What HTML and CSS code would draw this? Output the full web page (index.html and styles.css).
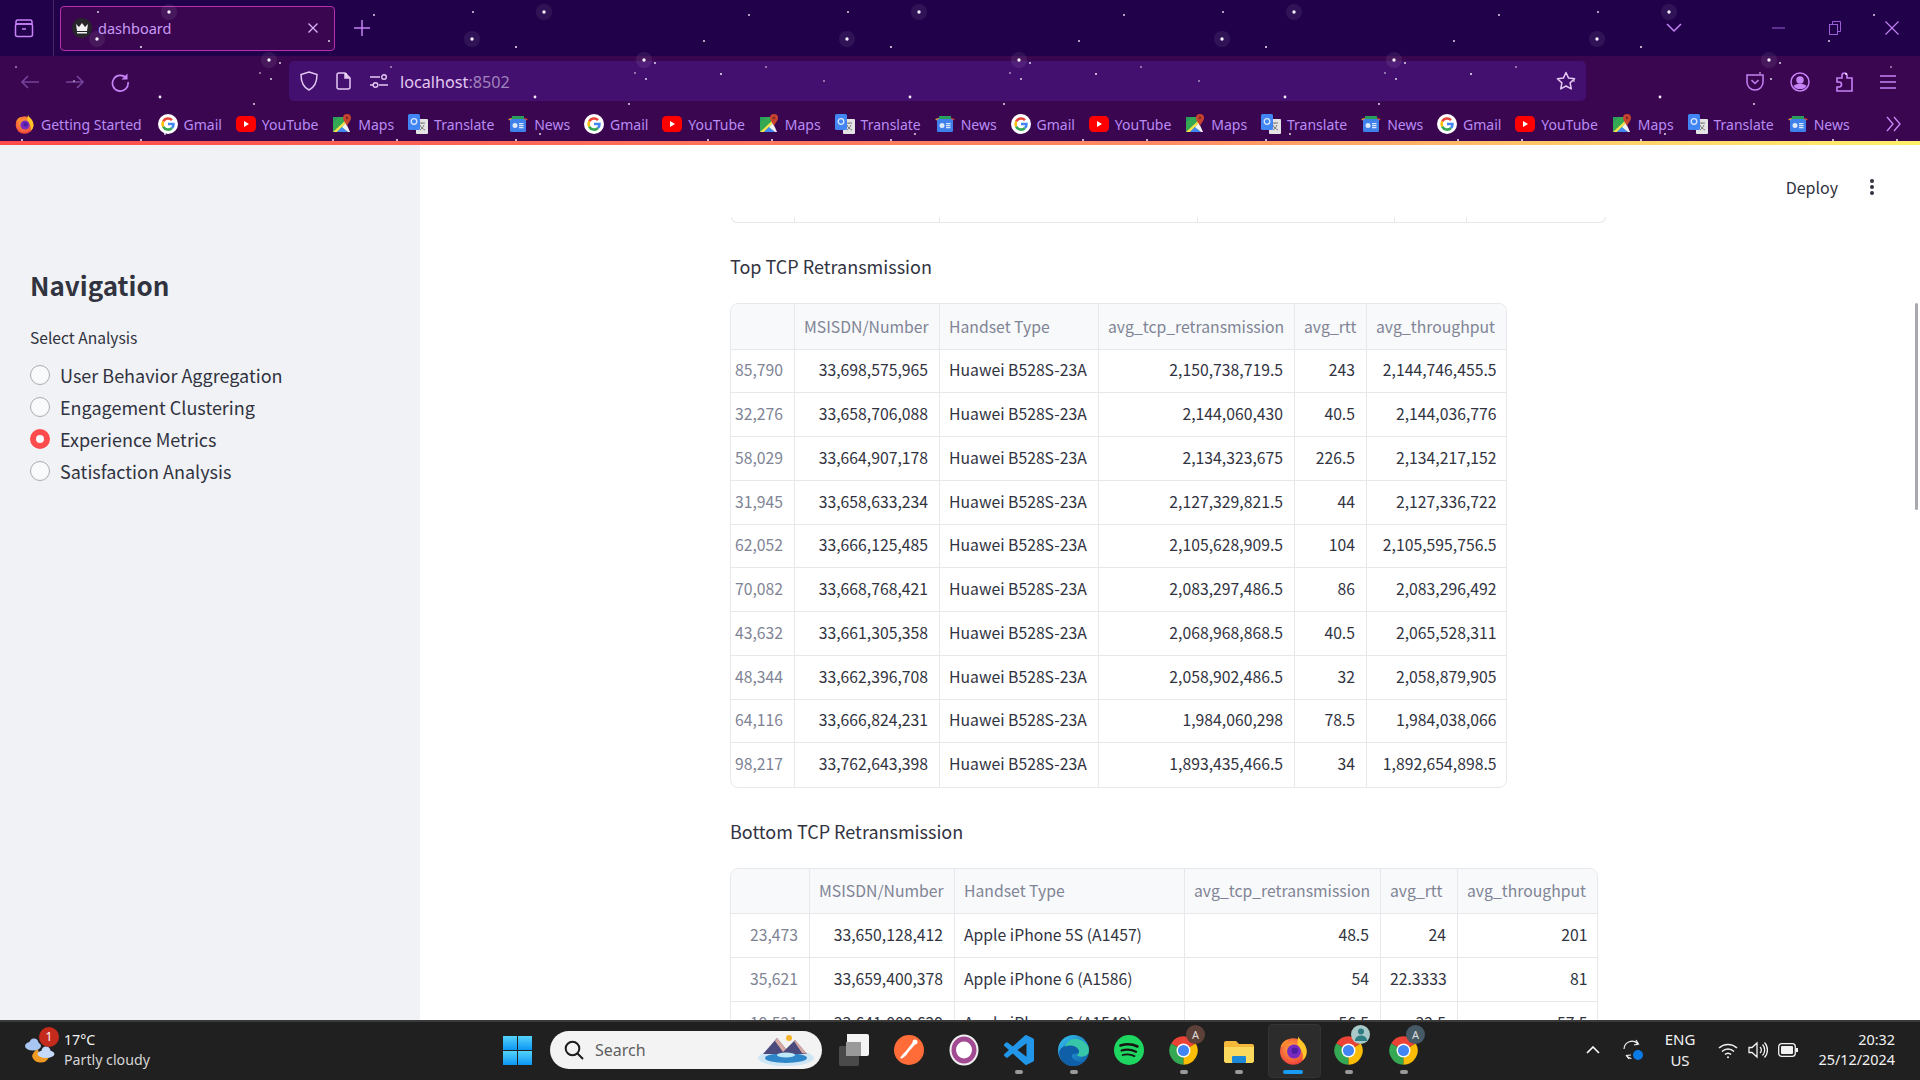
FILE: index.html
```html
<!DOCTYPE html>
<html lang="en">
<head>
  <meta charset="UTF-8">
  <title>dashboard</title>
  <link rel="stylesheet" href="styles.css">
</head>
<body>
  <svg class="sprites" width="0" height="0">
    <defs>
      <radialGradient id="ffBody" cx="45%" cy="40%" r="70%"><stop offset="0" stop-color="#ffb03a"/><stop offset="1" stop-color="#f0323c"/></radialGradient>
      <linearGradient id="edgeBody" x1="0" y1="0" x2="1" y2="1"><stop offset="0" stop-color="#35c1f1"/><stop offset="1" stop-color="#0c59a4"/></linearGradient>
      <linearGradient id="winBody" x1="0" y1="0" x2="0" y2="1"><stop offset="0" stop-color="#55d3fb"/><stop offset="1" stop-color="#0c96f4"/></linearGradient>
    </defs>
    <symbol id="i-firefox" viewBox="0 0 20 20">
      <circle cx="9.5" cy="11" r="8.8" fill="url(#ffBody)"/>
      <path d="M13 1c1 3 5 4 5.5 9.5.2 3-1 5-3 6.5 1-3 .5-6-2-8-1.500-1.500-1.500-4.500-.5-8z" fill="#ffc627"/>
      <path d="M1 8c1-3 3-4.500 5-5-.5 1.500 0 2.500 1 3z" fill="#ff8a2b"/>
      <circle cx="10" cy="11" r="4.600" fill="#7a2bbf"/>
      <circle cx="10.500" cy="10.500" r="2.200" fill="#4b1fa0"/>
    </symbol>
    <symbol id="i-google" viewBox="0 0 20 20">
      <circle cx="10" cy="10" r="10" fill="#fff"/>
      <path d="M5.200 7.400A5.500 5.500 0 0 1 14 6.200" fill="none" stroke="#ea4335" stroke-width="2.500"/>
      <path d="M5.200 7.400a5.500 5.500 0 0 0 0 5.200" fill="none" stroke="#fbbc05" stroke-width="2.500"/>
      <path d="M5.200 12.600a5.500 5.500 0 0 0 8.800 1.400" fill="none" stroke="#34a853" stroke-width="2.500"/>
      <path d="M14 14a5.500 5.500 0 0 0 1.500-4H10" fill="none" stroke="#4285f4" stroke-width="2.500"/>
    </symbol>
    <symbol id="i-youtube" viewBox="0 0 20 20">
      <rect x="0" y="2" width="20" height="16" rx="4.500" fill="#f00"/>
      <path d="M8 7l5 3-5 3z" fill="#fff"/>
    </symbol>
    <symbol id="i-maps" viewBox="0 0 20 20">
      <path d="M1 3h13v15H1z" fill="#34a853"/>
      <path d="M1 18l13-12v3L5 18z" fill="#fbe14d"/>
      <path d="M5 18l5-5 6 5z" fill="#4285f4"/>
      <path d="M10 13l4-4 4 9h-2z" fill="#f4f4f4"/>
      <path d="M1 3h6L1 9z" fill="#2a9d5a"/>
      <path d="M15 0a4 4 0 0 1 4 4c0 3-3 5-4 8-1-3-4-5-4-8a4 4 0 0 1 4-4z" fill="#c8442f"/>
      <circle cx="15" cy="4" r="1.400" fill="#8a2a1e"/>
    </symbol>
    <symbol id="i-translate" viewBox="0 0 20 20">
      <rect x="8" y="5" width="12" height="15" rx="1" fill="#e4e4e4"/>
      <path d="M11 9h6M14 9v1M12 11c1 3 3 4 5 5M16 11c-1 2-2 4-4 5" fill="none" stroke="#777" stroke-width="1"/>
      <rect x="0" y="0" width="12" height="16" rx="1.500" fill="#4285f4"/>
      <circle cx="6" cy="7.500" r="2.800" fill="none" stroke="#dbe7fd" stroke-width="1.300"/>
    </symbol>
    <symbol id="i-news" viewBox="0 0 20 20">
      <path d="M4 2h12v6H4z" fill="#2a9d5a"/>
      <path d="M0 5l4-1 1 5z" fill="#e8a33a"/>
      <path d="M20 5l-4-1-1 5z" fill="#d9402f"/>
      <rect x="2" y="5" width="16" height="13" rx="1.500" fill="#3f81ea"/>
      <rect x="4.500" y="9" width="5" height="5" rx="2.500" fill="#dce8fb"/>
      <path d="M11 9h4.500v1.200H11zM11 11h4.500v1.200H11zM11 13h4.500v1.200H11z" fill="#dce8fb"/>
    </symbol>
    <symbol id="i-chrome" viewBox="0 0 24 24">
      <path d="M12 12L2.470 6.500A11 11 0 0 1 21.530 6.500z" fill="#ea4335"/>
      <path d="M12 12L2.470 6.500A11 11 0 0 0 12 23z" fill="#34a853"/>
      <path d="M12 12L21.530 6.500A11 11 0 0 1 12 23z" fill="#fbbc05"/>
      <circle cx="12" cy="12" r="5.400" fill="#fff"/>
      <circle cx="12" cy="12" r="4.300" fill="#4285f4"/>
    </symbol>
  </svg>

  <header class="browser">
    <div class="titlebar">
      <div class="view-btn">
        <svg width="20" height="20" viewBox="0 0 20 20" fill="none" stroke="#c583f5" stroke-width="1.500"><rect x="1.500" y="6" width="17" height="12.500" rx="2"/><path d="M4 2h12a2 2 0 0 1 2 2v2H2V4a2 2 0 0 1 2-2zM8 11h4"/></svg>
      </div>
      <div class="tab">
        <span class="tab-icon">
          <svg width="14" height="12" viewBox="0 0 14 12"><path d="M1 2l3 3 3-4 3 4 3-3-1 7H2zM2 10h10v1.500H2z" fill="#f2f2f2"/></svg>
        </span>
        <span class="tab-title">dashboard</span>
        <svg class="tab-close" width="12" height="12" viewBox="0 0 12 12" stroke="#d9b4f7" stroke-width="1.300"><path d="M1.500 1.500l9 9M10.500 1.500l-9 9"/></svg>
      </div>
      <svg class="new-tab" width="16" height="16" viewBox="0 0 16 16" stroke="#c583f5" stroke-width="1.500"><path d="M8 0v16M0 8h16"/></svg>
      <svg class="tab-list" width="16" height="10" viewBox="0 0 16 10" fill="none" stroke="#c583f5" stroke-width="1.500"><path d="M1 1l7 7 7-7"/></svg>
      <div class="win-controls">
        <svg width="13" height="2" viewBox="0 0 13 2"><path d="M0 1h13" stroke="#9a5fd6" stroke-width="1"/></svg>
        <svg width="12" height="14" viewBox="0 0 12 14" fill="none" stroke="#9a5fd6"><rect x=".5" y="3.500" width="8" height="10"/><path d="M3.500 3.500V.5h8v10h-3"/></svg>
        <svg width="14" height="14" viewBox="0 0 14 14" stroke="#c583f5" stroke-width="1.100"><path d="M.5.5l13 13M13.500.5l-13 13"/></svg>
      </div>
    </div>

    <div class="toolbar">
      <div class="nav-btns">
        <svg width="20" height="16" viewBox="0 0 20 16" fill="none" stroke="#74439a" stroke-width="1.600"><path d="M19 8H2M8 2L2 8l6 6"/></svg>
        <svg width="20" height="16" viewBox="0 0 20 16" fill="none" stroke="#74439a" stroke-width="1.600"><path d="M1 8h17M12 2l6 6-6 6"/></svg>
        <svg width="20" height="20" viewBox="0 0 20 20" fill="none" stroke="#c583f5" stroke-width="1.700"><path d="M16.500 6.500A7.800 7.800 0 1 0 18 10"/><path d="M17.500 1.500v6h-6z" fill="#c583f5" stroke="none"/></svg>
      </div>
      <div class="urlbar">
        <svg width="18" height="20" viewBox="0 0 18 20" fill="none" stroke="#e3c8f2" stroke-width="1.500"><path d="M9 1l8 2.500C17 11 15 16 9 19 3 16 1 11 1 3.500z"/></svg>
        <svg width="15" height="18" viewBox="0 0 15 18" fill="none" stroke="#e3c8f2" stroke-width="1.500"><path d="M9 1H3a2 2 0 0 0-2 2v12a2 2 0 0 0 2 2h9a2 2 0 0 0 2-2V6z"/><path d="M9 1v5h5" fill="#e3c8f2"/></svg>
        <svg width="19" height="14" viewBox="0 0 19 14" fill="none" stroke="#e3c8f2" stroke-width="1.400"><path d="M1 3h10M1 11h3M10 11h9"/><circle cx="15" cy="3" r="2.300"/><circle cx="6.500" cy="11" r="2.300"/></svg>
        <span class="url-text">localhost<span class="url-port">:8502</span></span>
        <svg class="url-star" width="20" height="20" viewBox="0 0 20 20" fill="none" stroke="#e3c8f2" stroke-width="1.500" stroke-linejoin="round"><path d="M10 1.500l2.600 5.600 6 .7-4.500 4.100 1.200 6L10 15l-5.300 2.900 1.200-6L1.400 7.800l6-.7z"/></svg>
      </div>
      <div class="tool-btns">
        <svg width="18" height="18" viewBox="0 0 18 18" fill="none" stroke="#c583f5" stroke-width="1.500"><path d="M1 2h16v7a8 8 0 0 1-16 0z"/><path d="M5.500 7L9 10.500 12.500 7"/></svg>
        <svg width="20" height="20" viewBox="0 0 20 20" fill="none" stroke="#c583f5" stroke-width="1.500"><circle cx="10" cy="10" r="9"/><circle cx="10" cy="8" r="3" fill="#c583f5"/><path d="M4.500 14c2-2 9-2 11 0-2 3-9 3-11 0z" fill="#c583f5"/></svg>
        <svg width="18" height="20" viewBox="0 0 18 20" fill="none" stroke="#c583f5" stroke-width="1.600"><path d="M1 6h5V3.500a2.500 2.500 0 0 1 5 0V6h5v13H1v-4h2a2 2 0 0 0 0-5H1z"/></svg>
        <svg width="16" height="14" viewBox="0 0 16 14" stroke="#c583f5" stroke-width="1.400"><path d="M0 1h16M0 7h16M0 13h16"/></svg>
      </div>
    </div>

    <nav class="bookmarks">
      <a class="bookmark first"><svg><use href="#i-firefox"/></svg>Getting Started</a>
      <a class="bookmark"><svg><use href="#i-google"/></svg>Gmail</a>
      <a class="bookmark"><svg><use href="#i-youtube"/></svg>YouTube</a>
      <a class="bookmark"><svg><use href="#i-maps"/></svg>Maps</a>
      <a class="bookmark"><svg><use href="#i-translate"/></svg>Translate</a>
      <a class="bookmark"><svg><use href="#i-news"/></svg>News</a>
      <a class="bookmark"><svg><use href="#i-google"/></svg>Gmail</a>
      <a class="bookmark"><svg><use href="#i-youtube"/></svg>YouTube</a>
      <a class="bookmark"><svg><use href="#i-maps"/></svg>Maps</a>
      <a class="bookmark"><svg><use href="#i-translate"/></svg>Translate</a>
      <a class="bookmark"><svg><use href="#i-news"/></svg>News</a>
      <a class="bookmark"><svg><use href="#i-google"/></svg>Gmail</a>
      <a class="bookmark"><svg><use href="#i-youtube"/></svg>YouTube</a>
      <a class="bookmark"><svg><use href="#i-maps"/></svg>Maps</a>
      <a class="bookmark"><svg><use href="#i-translate"/></svg>Translate</a>
      <a class="bookmark"><svg><use href="#i-news"/></svg>News</a>
      <a class="bookmark"><svg><use href="#i-google"/></svg>Gmail</a>
      <a class="bookmark"><svg><use href="#i-youtube"/></svg>YouTube</a>
      <a class="bookmark"><svg><use href="#i-maps"/></svg>Maps</a>
      <a class="bookmark"><svg><use href="#i-translate"/></svg>Translate</a>
      <a class="bookmark"><svg><use href="#i-news"/></svg>News</a>
      <svg class="bookmark-more" width="16" height="16" viewBox="0 0 16 16" fill="none" stroke="#c583f5" stroke-width="1.400"><path d="M1 1l6 7-6 7M8 1l6 7-6 7"/></svg>
    </nav>

    <!-- theme stars, repeats every 375px -->
    <svg class="stars" width="1920" height="141">
      <defs>
        <pattern id="starTile" width="375" height="141" patternUnits="userSpaceOnUse">
          <g fill="#fff" fill-opacity=".07">
            <circle cx="169" cy="12" r="8"/><circle cx="97" cy="39" r="8"/><circle cx="269" cy="60" r="8"/>
          </g>
          <g fill="#f4ecf8">
            <circle cx="169" cy="12" r="1.700"/><circle cx="97" cy="39" r="1.700"/><circle cx="269" cy="60" r="1.700"/>
            <circle cx="160" cy="97" r="1.400"/>
            <circle cx="346" cy="74" r="1"/><circle cx="98" cy="12" r=".9"/><circle cx="374" cy="15" r=".9"/>
            <circle cx="141" cy="47" r="1"/><circle cx="329" cy="41" r=".9"/><circle cx="280" cy="63" r=".9"/>
            <circle cx="16" cy="67" r=".8"/><circle cx="260" cy="73" r=".8"/><circle cx="271" cy="79" r=".9"/>
            <circle cx="254" cy="104" r=".9"/><circle cx="74" cy="81" r=".8"/><circle cx="165" cy="134" r=".9"/>
            <circle cx="22" cy="140" r="1"/><circle cx="141" cy="140" r="1"/><circle cx="333" cy="140" r="1"/>
          </g>
        </pattern>
      </defs>
      <rect width="1920" height="141" fill="url(#starTile)"/>
    </svg>
  </header>
  <div class="accent-line"></div>

  <div class="app">
    <aside class="sidebar">
      <h2 class="side-title">Navigation</h2>
      <div class="side-label">Select Analysis</div>
      <div class="radio-group">
        <label class="radio"><span class="radio-dot"></span>User Behavior Aggregation</label>
        <label class="radio"><span class="radio-dot"></span>Engagement Clustering</label>
        <label class="radio"><span class="radio-dot checked"></span>Experience Metrics</label>
        <label class="radio"><span class="radio-dot"></span>Satisfaction Analysis</label>
      </div>
    </aside>

    <main class="main">
      <div class="topbar">
        <span class="deploy">Deploy</span>
        <span class="kebab"><i></i><i></i><i></i></span>
      </div>
      <div class="content">
        <div class="table-stub"><i></i><i></i><i></i><i></i><i></i></div>

        <section class="section">
          <h3 class="section-title">Top TCP Retransmission</h3>
          <div class="table-wrap top-table">
            <table>
              <thead>
                <tr><th></th><th>MSISDN/Number</th><th>Handset Type</th><th>avg_tcp_retransmission</th><th>avg_rtt</th><th>avg_throughput</th></tr>
              </thead>
              <tbody>
                <tr><td>85,790</td><td>33,698,575,965</td><td>Huawei B528S-23A</td><td>2,150,738,719.5</td><td>243</td><td>2,144,746,455.5</td></tr>
                <tr><td>32,276</td><td>33,658,706,088</td><td>Huawei B528S-23A</td><td>2,144,060,430</td><td>40.5</td><td>2,144,036,776</td></tr>
                <tr><td>58,029</td><td>33,664,907,178</td><td>Huawei B528S-23A</td><td>2,134,323,675</td><td>226.5</td><td>2,134,217,152</td></tr>
                <tr><td>31,945</td><td>33,658,633,234</td><td>Huawei B528S-23A</td><td>2,127,329,821.5</td><td>44</td><td>2,127,336,722</td></tr>
                <tr><td>62,052</td><td>33,666,125,485</td><td>Huawei B528S-23A</td><td>2,105,628,909.5</td><td>104</td><td>2,105,595,756.5</td></tr>
                <tr><td>70,082</td><td>33,668,768,421</td><td>Huawei B528S-23A</td><td>2,083,297,486.5</td><td>86</td><td>2,083,296,492</td></tr>
                <tr><td>43,632</td><td>33,661,305,358</td><td>Huawei B528S-23A</td><td>2,068,968,868.5</td><td>40.5</td><td>2,065,528,311</td></tr>
                <tr><td>48,344</td><td>33,662,396,708</td><td>Huawei B528S-23A</td><td>2,058,902,486.5</td><td>32</td><td>2,058,879,905</td></tr>
                <tr><td>64,116</td><td>33,666,824,231</td><td>Huawei B528S-23A</td><td>1,984,060,298</td><td>78.5</td><td>1,984,038,066</td></tr>
                <tr><td>98,217</td><td>33,762,643,398</td><td>Huawei B528S-23A</td><td>1,893,435,466.5</td><td>34</td><td>1,892,654,898.5</td></tr>
              </tbody>
            </table>
          </div>
        </section>

        <section class="section">
          <h3 class="section-title">Bottom TCP Retransmission</h3>
          <div class="table-wrap bottom-table">
            <table>
              <thead>
                <tr><th></th><th>MSISDN/Number</th><th>Handset Type</th><th>avg_tcp_retransmission</th><th>avg_rtt</th><th>avg_throughput</th></tr>
              </thead>
              <tbody>
                <tr><td>23,473</td><td>33,650,128,412</td><td>Apple iPhone 5S (A1457)</td><td>48.5</td><td>24</td><td>201</td></tr>
                <tr><td>35,621</td><td>33,659,400,378</td><td>Apple iPhone 6 (A1586)</td><td>54</td><td>22.3333</td><td>81</td></tr>
                <tr><td>19,521</td><td>33,641,009,629</td><td>Apple iPhone 6 (A1549)</td><td>56.5</td><td>32.5</td><td>57.5</td></tr>
              </tbody>
            </table>
          </div>
        </section>
      </div>
      <div class="scroll-thumb"></div>
    </main>
  </div>

  <footer class="taskbar">
    <div class="weather">
      <span class="weather-icon">
        <svg width="32" height="30" viewBox="0 0 32 30">
          <path d="M8 21a9 9 0 0 0 17 1c-6 1-10-1-11-8-3 1-5 4-6 7z" fill="#f09a24"/>
          <ellipse cx="9" cy="11" rx="8" ry="4.500" fill="#a9c6f2"/><circle cx="10" cy="8" r="4.500" fill="#a9c6f2"/>
          <ellipse cx="22" cy="19" rx="8.500" ry="4" fill="#c5dafa"/><circle cx="22" cy="16" r="4.500" fill="#c5dafa"/>
        </svg>
        <b class="weather-badge">1</b>
      </span>
      <div class="weather-text"><div class="temp">17°C</div><div class="sky">Partly cloudy</div></div>
    </div>

    <svg class="start" width="29" height="29" viewBox="0 0 29 29">
      <rect width="14" height="14" fill="url(#winBody)"/><rect x="15" width="14" height="14" fill="url(#winBody)"/>
      <rect y="15" width="14" height="14" fill="url(#winBody)"/><rect x="15" y="15" width="14" height="14" fill="url(#winBody)"/>
    </svg>

    <div class="searchbox">
      <svg width="20" height="20" viewBox="0 0 20 20" fill="none" stroke="#1c1c1c" stroke-width="2"><circle cx="8.500" cy="8.500" r="6.800"/><path d="M13.500 13.500L19 19"/></svg>
      <span class="search-text">Search</span>
      <svg class="search-art" width="58" height="34" viewBox="0 0 58 34">
        <ellipse cx="29" cy="25" rx="28" ry="8" fill="#cfe6f5"/>
        <ellipse cx="29" cy="25" rx="21" ry="5" fill="#2f86c9"/>
        <path d="M6 21L20 5l9 11 9-9 12 14z" fill="#4b4a7c"/>
        <path d="M18 8l2-3 9 11-3 3zM37 8l1-1 12 14-5-1z" fill="#d6a9a4"/>
        <circle cx="32" cy="5" r="3" fill="#f6b42c"/>
        <ellipse cx="29" cy="22" rx="9" ry="2.500" fill="#bfe8f7"/>
      </svg>
    </div>

    <div class="apps">
      <div class="app-item">
        <svg width="30" height="32" viewBox="0 0 30 32"><rect y="12" width="20" height="20" rx="2" fill="#4a4a4a"/><rect x="7" y="8" width="15" height="14" fill="#9a9a9a"/><path d="M8 0h20a2 2 0 0 1 2 2v18a2 2 0 0 1-2 2h-6V8H8z" fill="#f4f4f4"/></svg>
      </div>
      <div class="app-item">
        <svg width="30" height="30" viewBox="0 0 30 30"><circle cx="15" cy="15" r="15" fill="#ff6c37"/><path d="M21 6l-2 1-7 9-3 3-3 4 2 .5 4-3 2-3 8-9z" fill="#fff"/><circle cx="21" cy="7" r="2.500" fill="#fff"/></svg>
      </div>
      <div class="app-item">
        <svg width="30" height="32" viewBox="0 0 30 32"><ellipse cx="15" cy="16" rx="14.500" ry="15.500" fill="#f0f0f0"/><ellipse cx="15" cy="16" rx="12.500" ry="13.500" fill="#a24a92"/><ellipse cx="15" cy="16" rx="8" ry="8.500" fill="#fff"/></svg>
      </div>
      <div class="app-item has-dot">
        <svg width="30" height="30" viewBox="0 0 24 24"><path fill="#2296e8" d="M23.150 2.587L18.210.21a1.494 1.494 0 0 0-1.705.29l-9.460 8.630-4.120-3.128a.999.999 0 0 0-1.276.057L.327 7.261A1 1 0 0 0 .326 8.740L3.899 12 .326 15.260a1 1 0 0 0 .001 1.479L1.650 17.940a.999.999 0 0 0 1.276.057l4.120-3.128 9.460 8.630a1.492 1.492 0 0 0 1.704.29l4.942-2.377A1.500 1.500 0 0 0 24 20.060V3.939a1.500 1.500 0 0 0-.850-1.352zm-5.146 14.861L10.826 12l7.178-5.448v10.896z"/></svg>
      </div>
      <div class="app-item has-dot">
        <svg width="31" height="31" viewBox="0 0 31 31"><circle cx="15.500" cy="15.500" r="15.500" fill="url(#edgeBody)"/><path d="M1 18c1-6 7-9 13-8 6 1 8 5 7 8-4 1-8 0-7 4 1 3 5 5 10 5-3 3-6 4-9 4C8 31 2 26 1 18z" fill="#0f5ea8"/><path d="M31 15c0 2-1 5-4 6-3 1-7 1-8-1 2-1 3-4 1-6-2-3-8-5-13-2C9 6 14 3 19 4c6 1 12 5 12 11z" fill="#37c6a8"/></svg>
      </div>
      <div class="app-item">
        <svg width="30" height="30" viewBox="0 0 30 30" fill="none" stroke="#191414" stroke-linecap="round"><circle cx="15" cy="15" r="15" fill="#1ed760" stroke="none"/><path d="M6.500 10.500c6-2 12-1.500 17 1" stroke-width="2.600"/><path d="M7.500 15.500c5-1.500 10-1 14.500 1.300" stroke-width="2.200"/><path d="M8.500 20c4-1 8.500-.8 12 1.100" stroke-width="1.800"/></svg>
      </div>
      <div class="app-item has-dot">
        <svg class="chrome-icon"><use href="#i-chrome"/></svg>
        <span class="app-badge badge-brown">A</span>
      </div>
      <div class="app-item has-dot">
        <svg width="30" height="30" viewBox="0 0 30 30"><path d="M0 8a2 2 0 0 1 2-2h10l3 3h13a2 2 0 0 1 2 2v14a3 3 0 0 1-3 3H3a3 3 0 0 1-3-3z" fill="#f4b93a"/><path d="M0 12h30v13a3 3 0 0 1-3 3H3a3 3 0 0 1-3-3z" fill="#fbd95c"/><rect x="8" y="21" width="14" height="7" rx="1" fill="#1b88d8"/></svg>
      </div>
      <div class="app-item is-active">
        <svg width="30" height="30"><use href="#i-firefox"/></svg>
      </div>
      <div class="app-item has-dot">
        <svg class="chrome-icon"><use href="#i-chrome"/></svg>
        <span class="app-badge badge-teal">
          <svg width="12" height="13" viewBox="0 0 12 13" fill="#2e7d83"><circle cx="6" cy="3.500" r="3"/><path d="M0 13c0-4 3-5.500 6-5.500s6 1.500 6 5.500z"/></svg>
        </span>
      </div>
      <div class="app-item has-dot">
        <svg class="chrome-icon"><use href="#i-chrome"/></svg>
        <span class="app-badge badge-slate">A</span>
      </div>
    </div>

    <div class="tray">
      <div class="tray-item w40"><svg width="14" height="8" viewBox="0 0 14 8" fill="none" stroke="#fff" stroke-width="1.600"><path d="M1 7l6-6 6 6"/></svg></div>
      <div class="tray-item w40">
        <svg width="20" height="22" viewBox="0 0 20 22" fill="none" stroke="#f2f2f2" stroke-width="1.200"><path d="M1 10a8 8 0 0 1 14-5M13 1l2.500 4L11 6M6 20l-2.500-3.500L8 16"/><path d="M3.500 16.500c1 1.500 3 3 5 3"/><circle cx="15" cy="16" r="5" fill="#0a7ae6" stroke="none"/></svg>
      </div>
      <div class="tray-lang"><div>ENG</div><div>US</div></div>
      <div class="tray-item w30 tray-gap">
        <svg width="20" height="17" viewBox="0 0 20 17" fill="none" stroke="#f2f2f2" stroke-width="1.500"><path d="M1 6a13 13 0 0 1 18 0M4 9.500a8.500 8.500 0 0 1 12 0M7 12.500a4 4 0 0 1 6 0"/><circle cx="10" cy="15.300" r="1" fill="#f2f2f2" stroke="none"/></svg>
      </div>
      <div class="tray-item w30">
        <svg width="20" height="18" viewBox="0 0 20 18" fill="none" stroke="#f2f2f2" stroke-width="1.300"><path d="M1 6.500h3L9 2v14l-5-4.500H1zM12 6a4 4 0 0 1 0 6M14.500 3.500a8 8 0 0 1 0 11M16.500 1.500a11 11 0 0 1 0 15"/></svg>
      </div>
      <div class="tray-item w30">
        <svg width="20" height="14" viewBox="0 0 20 14" fill="none" stroke="#f2f2f2" stroke-width="1.300"><rect x=".7" y=".7" width="16.600" height="12.600" rx="3"/><rect x="3" y="3" width="12" height="8" rx="1" fill="#f2f2f2" stroke="none"/><path d="M19 5v4" stroke-width="2"/></svg>
      </div>
      <div class="clock"><div>20:32</div><div>25/12/2024</div></div>
    </div>
  </footer>
</body>
</html>
```

FILE: styles.css
```css
* {
  box-sizing: border-box;
}

html, body {
  margin: 0;
  height: 100%;
  overflow: hidden;
}

body {
  display: flex;
  flex-direction: column;
  width: 1920px;
  height: 1080px;
  font-family: "Noto Sans CJK SC", "Liberation Sans", sans-serif;
  color: #31333f;
  background: #fff;
}

.sprites {
  position: absolute;
}

/* browser chrome */
.browser {
  position: relative;
  height: 141px;
  font-family: "Noto Sans", "Open Sans", sans-serif;
  background: #3a0650;
}

.stars {
  position: absolute;
  left: 0;
  top: 0;
  pointer-events: none;
}

.titlebar {
  display: flex;
  align-items: center;
  height: 56px;
  background: #20014a;
}

.view-btn {
  display: flex;
  align-items: center;
  justify-content: center;
  width: 54px;
  height: 56px;
  padding-right: 5px;
  border-right: 1px solid #3f2a66;
}

.tab {
  display: flex;
  align-items: center;
  width: 275px;
  height: 45px;
  margin-left: 6px;
  padding: 0 15px 0 11px;
  background: #3a0650;
  border: 1px solid #b52fb0;
  border-radius: 4px;
}

.tab-icon {
  display: flex;
  align-items: center;
  justify-content: center;
  width: 20px;
  height: 20px;
  border-radius: 50%;
  background: #26262b;
}

.tab-title {
  flex: 1;
  margin-left: 6px;
  font-size: 14.5px;
  color: #c79af5;
}

.new-tab {
  margin-left: 19px;
}

.tab-list {
  margin-left: 1296px;
}

.win-controls {
  display: flex;
  align-items: center;
  margin-left: 90px;
  gap: 44px;
}

.toolbar {
  display: flex;
  align-items: center;
  height: 51px;
}

.nav-btns {
  display: flex;
  align-items: center;
  gap: 25px;
  width: 289px;
  padding-left: 20px;
}

.urlbar {
  display: flex;
  align-items: center;
  width: 1297px;
  height: 40px;
  margin-top: -1px;
  padding: 0 10px 0 11px;
  gap: 18px;
  background: #441070;
  border-radius: 5px;
}

.url-text {
  flex: 1;
  margin-top: 1px;
  margin-left: -6px;
  font-size: 16.2px;
  color: #e3c8f2;
}

.url-port {
  color: #a182bd;
}

.tool-btns {
  display: flex;
  align-items: center;
  gap: 26px;
  margin-left: 160px;
}

.bookmarks {
  display: flex;
  align-items: center;
  height: 34px;
  padding-left: 15px;
  gap: 13.9px;
  font-size: 14px;
  color: #b98cf5;
  white-space: nowrap;
}

.bookmark {
  display: flex;
  align-items: center;
  gap: 6px;
}

.bookmark.first {
  margin-right: 2px;
}

.bookmark svg {
  width: 20px;
  height: 20px;
}

.bookmark-more {
  margin-left: auto;
  margin-right: 18px;
}

.accent-line {
  height: 4px;
  background: linear-gradient(to right, #ff4b4b, #ff8a62 60%, #ffd36b 85%, #fff06a);
}

/* streamlit app */
.app {
  display: flex;
  height: 875px;
  overflow: hidden;
}

.sidebar {
  width: 420px;
  flex: none;
  padding: 116px 30px 0;
  background: #f0f2f6;
}

.side-title {
  margin: 0;
  font-size: 26px;
  line-height: 48px;
  font-weight: 600;
}

.side-label {
  margin-top: 16px;
  font-size: 15.6px;
  line-height: 24px;
}

.radio-group {
  display: flex;
  flex-direction: column;
  margin-top: 10px;
}

.radio {
  display: flex;
  align-items: center;
  height: 32px;
  gap: 10px;
  font-size: 18px;
}

.radio-dot {
  width: 20px;
  height: 20px;
  border-radius: 50%;
  background: #f9fafc;
  border: 1px solid #a9abb3;
}

.radio-dot.checked {
  background: #f9fafc;
  border: 6px solid #ff4b4b;
}

.main {
  position: relative;
  flex: 1;
  overflow: hidden;
}

.topbar {
  display: flex;
  align-items: center;
  justify-content: flex-end;
  height: 72px;
  padding: 24px 46px 12px 0;
}

.deploy {
  font-size: 16px;
}

.kebab {
  display: flex;
  flex-direction: column;
  gap: 2px;
  margin-left: 32px;
}

.kebab i {
  width: 4px;
  height: 4px;
  border-radius: 50%;
  background: #31333f;
}

.content {
  margin-left: 310px;
}

.table-stub {
  display: flex;
  width: 875px;
  height: 6px;
  margin-left: 1px;
  border: 1px solid #e6e8ec;
  border-top: 0;
  border-radius: 0 0 8px 8px;
}

.table-stub i {
  border-right: 1px solid #e6e8ec;
}

.table-stub i:nth-child(1) { width: 63px; }
.table-stub i:nth-child(2) { width: 145px; }
.table-stub i:nth-child(3) { width: 258px; }
.table-stub i:nth-child(4) { width: 197px; }
.table-stub i:nth-child(5) { width: 72px; }

.section {
  margin-top: 28px;
}

.section-title {
  margin: 0 0 22px;
  font-size: 18px;
  line-height: 30px;
  font-weight: 400;
}

.table-wrap {
  overflow: hidden;
  border: 1px solid #e6e8ec;
  border-radius: 8px;
}

.top-table {
  width: 777px;
}

.bottom-table {
  width: 868px;
}

table {
  width: 100%;
  table-layout: fixed;
  border-collapse: collapse;
  font-size: 15.75px;
}

th, td {
  height: 43.75px;
  padding: 0 10.5px 2px 9.5px;
  border: 1px solid #e6e8ec;
  white-space: nowrap;
  overflow: hidden;
  text-align: right;
}

th {
  height: 45px;
  padding-bottom: 0;
  font-weight: 400;
  text-align: left;
  color: #808495;
  background: #f8f9fb;
}

tr > :first-child {
  border-left: 0;
}

tr > :last-child {
  border-right: 0;
}

thead tr > * {
  border-top: 0;
}

tbody tr:last-child td {
  border-bottom: 0;
}

td:first-child {
  padding-left: 0;
  color: #808495;
}

td:nth-child(3) {
  text-align: left;
}

.top-table th:nth-child(1) { width: 63px; }
.top-table th:nth-child(2) { width: 145px; }
.top-table th:nth-child(3) { width: 159px; }
.top-table th:nth-child(4) { width: 196px; }
.top-table th:nth-child(5) { width: 72px; }
.top-table th:nth-child(6) { width: 141px; }

.bottom-table th:nth-child(1) { width: 78px; }
.bottom-table th:nth-child(2) { width: 145px; }
.bottom-table th:nth-child(3) { width: 230px; }
.bottom-table th:nth-child(4) { width: 196px; }
.bottom-table th:nth-child(5) { width: 77px; }
.bottom-table th:nth-child(6) { width: 141px; }

.scroll-thumb {
  position: absolute;
  right: 2px;
  top: 158px;
  width: 3px;
  height: 207px;
  border-radius: 2px;
  background: #a8a8ad;
}

/* windows taskbar */
.taskbar {
  display: flex;
  align-items: center;
  height: 60px;
  padding-bottom: 2px;
  font-family: "Noto Sans", "Open Sans", sans-serif;
  color: #f2f2f2;
  background: #202020;
  border-top: 2px solid #3a3a3a;
}

.weather {
  display: flex;
  align-items: center;
  width: 503px;
  padding-left: 24px;
}

.weather-icon {
  position: relative;
  width: 32px;
  height: 30px;
}

.weather-badge {
  position: absolute;
  left: 15px;
  top: -8px;
  width: 20px;
  height: 20px;
  border-radius: 50%;
  background: #c42b1c;
  font-size: 12px;
  font-weight: 400;
  line-height: 20px;
  text-align: center;
  color: #fff;
}

.weather-text {
  margin-left: 8px;
  font-size: 14.2px;
  line-height: 20px;
}

.sky {
  color: #d6d6d6;
}

.start {
  flex: none;
}

.searchbox {
  display: flex;
  align-items: center;
  width: 272px;
  height: 38px;
  margin-left: 18px;
  padding: 0 7px 0 14px;
  border-radius: 19px;
  background: #f3f3f3;
}

.search-text {
  flex: 1;
  margin-left: 11px;
  font-size: 16px;
  color: #5f5f5f;
}

.apps {
  display: flex;
  align-items: center;
  margin-left: 4px;
}

.app-item {
  position: relative;
  display: flex;
  align-items: center;
  justify-content: center;
  width: 55px;
  height: 54px;
}

.has-dot::after {
  content: "";
  position: absolute;
  left: 24px;
  bottom: 3px;
  width: 8px;
  height: 4px;
  border-radius: 2px;
  background: #9a9a9a;
}

.is-active::before {
  content: "";
  position: absolute;
  left: 2px;
  top: 1px;
  width: 51px;
  height: 52px;
  border-radius: 4px;
  background: #2c2c2c;
  border: 1px solid #333;
}

.is-active svg {
  position: relative;
}

.is-active::after {
  content: "";
  position: absolute;
  left: 17px;
  bottom: 3px;
  width: 20px;
  height: 4px;
  border-radius: 2px;
  background: #1a9cf5;
}

.chrome-icon {
  width: 31px;
  height: 31px;
}

.app-badge {
  position: absolute;
  left: 30px;
  top: 2px;
  display: flex;
  align-items: center;
  justify-content: center;
  width: 19px;
  height: 19px;
  border-radius: 50%;
  font-size: 11px;
  color: #ddd;
}

.badge-brown { background: #5d4037; }
.badge-teal { background: #a9c9c9; }
.badge-slate { background: #455a64; }

.tray {
  display: flex;
  align-items: center;
  margin-left: auto;
  width: 347px;
  padding-right: 25px;
}

.tray-item {
  display: flex;
  align-items: center;
  justify-content: center;
}

.w40 { width: 40px; }
.w30 { width: 30px; }

.tray-gap {
  margin-left: 6px;
}

.tray-lang {
  width: 54px;
  font-size: 15px;
  line-height: 21px;
  text-align: center;
}

.clock {
  flex: 1;
  font-size: 14.4px;
  line-height: 20px;
  text-align: right;
}
```
